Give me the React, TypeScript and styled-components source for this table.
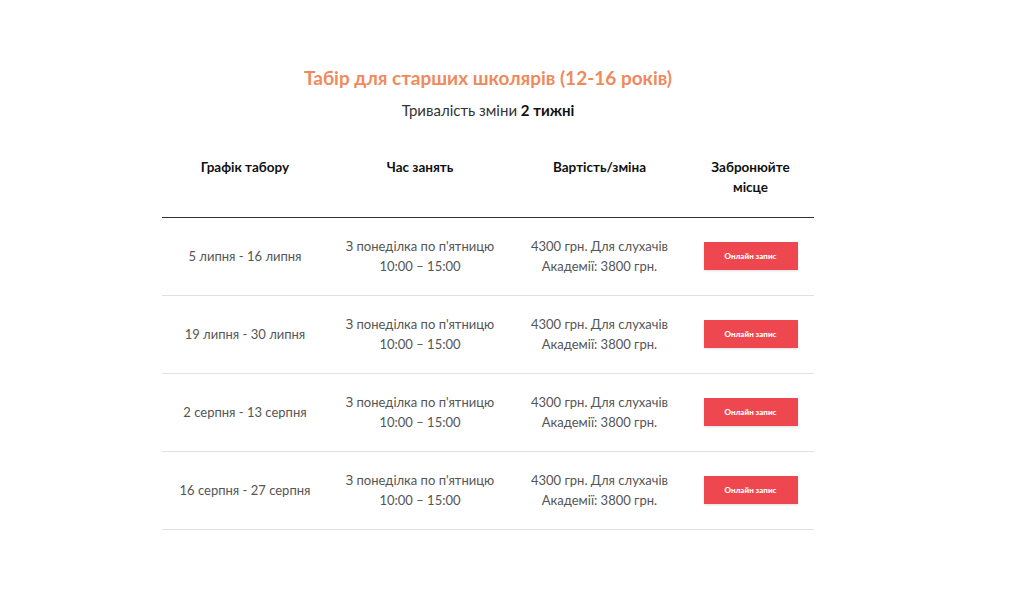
import React from "react";
import styled, { createGlobalStyle } from "styled-components";

const GlobalStyle = createGlobalStyle`
  html, body { margin: 0; padding: 0; background: #ffffff; }
  body { font-family: "Lato", "Open Sans", sans-serif; }
`;

const Page = styled.div`
  width: 1024px;
  height: 600px;
  box-sizing: border-box;
  padding: 64px 0 0 162px;
`;

const Section = styled.section`
  width: 652px;
  display: flex;
  flex-direction: column;
  align-items: center;
`;

const Title = styled.h2`
  margin: 0;
  font-size: 19px;
  line-height: 28px;
  font-weight: 700;
  color: #f08a5d;
`;

const Subtitle = styled.p`
  margin: 8px 0 0;
  font-size: 15px;
  line-height: 20px;
  color: #333333;
  b { color: #111111; font-weight: 700; }
`;

const Table = styled.div`
  margin-top: 25px;
  width: 100%;
  display: grid;
  grid-template-columns: 166px 184px 175px 127px;
`;

const HeadCell = styled.div`
  padding: 12px 8px 20px;
  text-align: center;
  font-size: 13.5px;
  line-height: 20px;
  font-weight: 700;
  color: #111111;
  border-bottom: 1px solid #333333;
`;

const Cell = styled.div`
  padding: 18px 8px 19px;
  min-height: 40px;
  display: flex;
  align-items: center;
  justify-content: center;
  text-align: center;
  font-size: 13px;
  line-height: 20px;
  color: #555555;
  border-bottom: 1px solid #e2e2e2;
`;

const BookButton = styled.button`
  width: 94px;
  height: 28px;
  border: none;
  border-radius: 0;
  background: #ef4750;
  color: #ffffff;
  font-family: "Lato", sans-serif;
  font-size: 8px;
  font-weight: 900;
  cursor: pointer;
  box-shadow: 0 1px 2px rgba(0, 0, 0, 0.12);
`;

const rows = [
  "5 липня - 16 липня",
  "19 липня - 30 липня",
  "2 серпня - 13 серпня",
  "16 серпня - 27 серпня",
];

export default function App() {
  return (
    <>
      <GlobalStyle />
      <Page>
        <Section>
          <Title>Табір для старших школярів (12-16 років)</Title>
          <Subtitle>
            Тривалість зміни <b>2 тижні</b>
          </Subtitle>
          <Table>
            <HeadCell>Графік табору</HeadCell>
            <HeadCell>Час занять</HeadCell>
            <HeadCell>Вартість/зміна</HeadCell>
            <HeadCell>
              Забронюйте
              <br />
              місце
            </HeadCell>
            {rows.map((r) => (
              <React.Fragment key={r}>
                <Cell>{r}</Cell>
                <Cell>
                  З понеділка по п'ятницю
                  <br />
                  10:00 – 15:00
                </Cell>
                <Cell>
                  4300 грн. Для слухачів
                  <br />
                  Академії: 3800 грн.
                </Cell>
                <Cell>
                  <BookButton>Онлайн запис</BookButton>
                </Cell>
              </React.Fragment>
            ))}
          </Table>
        </Section>
      </Page>
    </>
  );
}
